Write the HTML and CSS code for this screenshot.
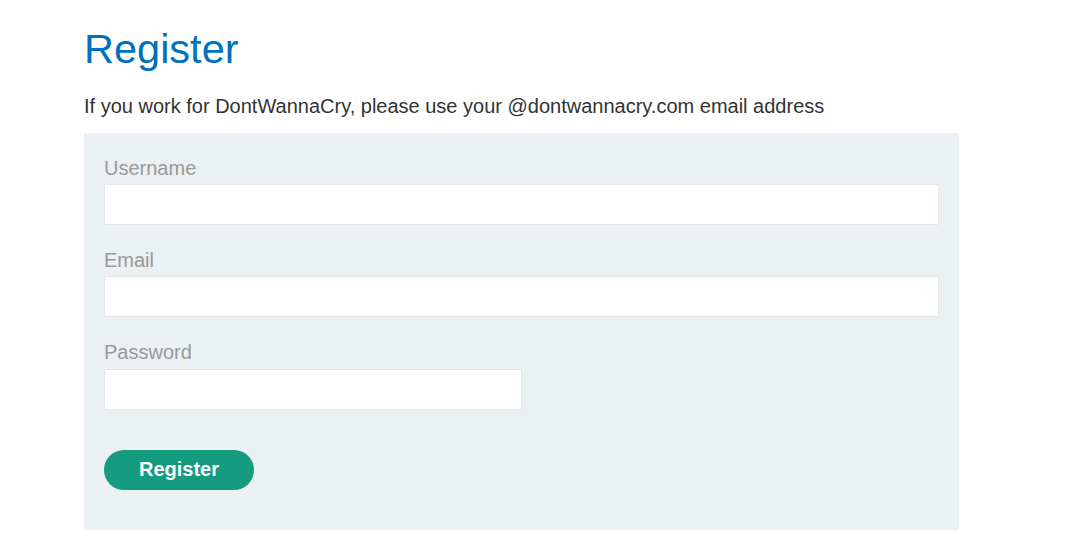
FILE: index.html
```html
<!DOCTYPE html>
<html>
<head>
<meta charset="utf-8">
<link rel="stylesheet" href="styles.css">
<title>Register</title>
</head>
<body>
<div class="container">
  <h1 class="title">Register</h1>
  <p class="note">If you work for DontWannaCry, please use your @dontwannacry.com email address</p>
  <form class="panel">
    <label class="label">Username</label>
    <input class="field" type="text">
    <label class="label">Email</label>
    <input class="field" type="email">
    <label class="label label-last">Password</label>
    <input class="field half" type="password">
    <button class="btn" type="button">Register</button>
  </form>
</div>
</body>
</html>
```
FILE: styles.css
```css
html, body {
  margin: 0;
  padding: 0;
  background: #fff;
  font-family: "Liberation Sans", Arial, sans-serif;
}
.container {
  width: 875px;
  margin-left: 84px;
  padding-top: 24px;
}
.title {
  margin: 0;
  font-size: 41.5px;
  font-weight: normal;
  line-height: 50px;
  color: #0071bc;
}
.note {
  margin: 18px 0 0 0;
  font-size: 20px;
  line-height: 28px;
  color: #333332;
}
.panel {
  margin-top: 13px;
  background: #ebf0f2;
  padding: 22px 20px 40px 20px;
  display: flex;
  flex-direction: column;
  align-items: flex-start;
}
.label {
  font-size: 20px;
  line-height: 26px;
  color: #999;
  margin-bottom: 3px;
}
.label-last {
  margin-bottom: 4px;
}
.field {
  box-sizing: border-box;
  width: 100%;
  height: 41px;
  border: 1px solid #e6e6e6;
  background: #fff;
  margin: 0 0 22px 0;
  padding: 0 8px;
  font-size: 16px;
}
.field.half {
  width: 50%;
}
.btn {
  margin-top: 18px;
  width: 150px;
  height: 40px;
  padding: 0 0 2px 0;
  border: 0;
  border-radius: 20px;
  background: #159b80;
  color: #fff;
  font-family: "Liberation Sans", Arial, sans-serif;
  font-weight: bold;
  font-size: 20px;
}
```
